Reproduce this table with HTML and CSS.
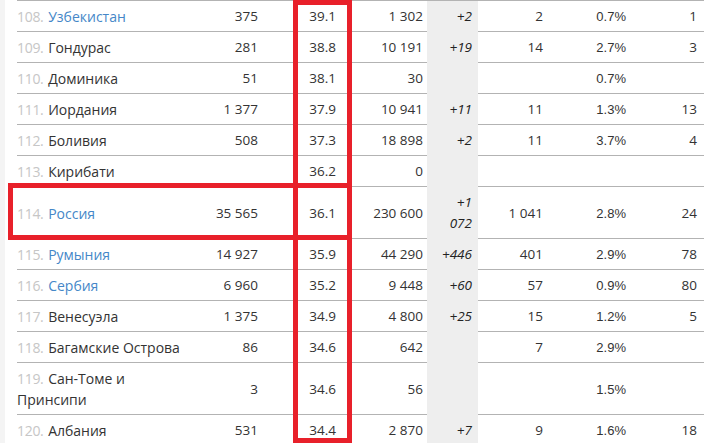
FILE: index.html
```html
<!DOCTYPE html>
<html lang="ru">
<head>
<meta charset="utf-8">
<title>Таблица</title>
<link rel="stylesheet" href="styles.css">
</head>
<body>
<div class="page">
  <div class="card">
    <table class="stats">
      <colgroup>
        <col class="w-name"><col class="w-c2"><col class="w-c3"><col class="w-c4"><col class="w-c5"><col class="w-c6"><col class="w-c7"><col class="w-c8">
      </colgroup>
      <tbody>
        <tr class="first"><td class="name"><span class="rank">108.</span> <a class="link">Узбекистан</a></td><td class="num">375</td><td class="num">39.1</td><td class="num">1 302</td><td class="new">+2</td><td class="num">2</td><td class="num pct">0.7%</td><td class="num last">1</td></tr>
        <tr><td class="name"><span class="rank">109.</span> Гондурас</td><td class="num">281</td><td class="num">38.8</td><td class="num">10 191</td><td class="new">+19</td><td class="num">14</td><td class="num pct">2.7%</td><td class="num last">3</td></tr>
        <tr><td class="name"><span class="rank">110.</span> Доминика</td><td class="num">51</td><td class="num">38.1</td><td class="num">30</td><td class="new"></td><td class="num"></td><td class="num pct">0.7%</td><td class="num last"></td></tr>
        <tr><td class="name"><span class="rank">111.</span> Иордания</td><td class="num">1 377</td><td class="num">37.9</td><td class="num">10 941</td><td class="new">+11</td><td class="num">11</td><td class="num pct">1.3%</td><td class="num last">13</td></tr>
        <tr><td class="name"><span class="rank">112.</span> Боливия</td><td class="num">508</td><td class="num">37.3</td><td class="num">18 898</td><td class="new">+2</td><td class="num">11</td><td class="num pct">3.7%</td><td class="num last">4</td></tr>
        <tr><td class="name"><span class="rank">113.</span> Кирибати</td><td class="num"></td><td class="num">36.2</td><td class="num">0</td><td class="new"></td><td class="num"></td><td class="num pct"></td><td class="num last"></td></tr>
        <tr><td class="name"><span class="rank">114.</span> <a class="link">Россия</a></td><td class="num">35 565</td><td class="num">36.1</td><td class="num">230 600</td><td class="new">+1<br>072</td><td class="num">1 041</td><td class="num pct">2.8%</td><td class="num last">24</td></tr>
        <tr><td class="name"><span class="rank">115.</span> <a class="link">Румыния</a></td><td class="num">14 927</td><td class="num">35.9</td><td class="num">44 290</td><td class="new">+446</td><td class="num">401</td><td class="num pct">2.9%</td><td class="num last">78</td></tr>
        <tr><td class="name"><span class="rank">116.</span> <a class="link">Сербия</a></td><td class="num">6 960</td><td class="num">35.2</td><td class="num">9 448</td><td class="new">+60</td><td class="num">57</td><td class="num pct">0.9%</td><td class="num last">80</td></tr>
        <tr><td class="name"><span class="rank">117.</span> Венесуэла</td><td class="num">1 375</td><td class="num">34.9</td><td class="num">4 800</td><td class="new">+25</td><td class="num">15</td><td class="num pct">1.2%</td><td class="num last">5</td></tr>
        <tr><td class="name"><span class="rank">118.</span> Багамские Острова</td><td class="num">86</td><td class="num">34.6</td><td class="num">642</td><td class="new"></td><td class="num">7</td><td class="num pct">2.9%</td><td class="num last"></td></tr>
        <tr><td class="name"><span class="rank">119.</span> Сан-Томе и<br>Принсипи</td><td class="num">3</td><td class="num">34.6</td><td class="num">56</td><td class="new"></td><td class="num"></td><td class="num pct">1.5%</td><td class="num last"></td></tr>
        <tr><td class="name"><span class="rank">120.</span> Албания</td><td class="num">531</td><td class="num">34.4</td><td class="num">2 870</td><td class="new">+7</td><td class="num">9</td><td class="num pct">1.6%</td><td class="num last">18</td></tr>
      </tbody>
    </table>
  </div>
  <div class="mark mark-col"></div>
  <div class="mark mark-row"></div>
</div>
</body>
</html>
```
FILE: styles.css
```css
html, body {
  margin: 0;
  padding: 0;
  background: #f4f4f4;
  overflow: hidden;
}
.page {
  position: relative;
  width: 716px;
  height: 443px;
  overflow: hidden;
}
.card {
  margin-left: 5px;
  padding-left: 12px;
  background: #ffffff;
  height: 443px;
}
.stats {
  border-collapse: separate;
  border-spacing: 0;
  table-layout: fixed;
  width: 687px;
  font-family: "Open Sans", "Noto Sans", sans-serif;
  font-size: 13.5px;
  line-height: 21px;
  color: #333333;
}
.w-name { width: 173px; }
.w-c2 { width: 72px; }
.w-c3 { width: 78px; }
.w-c4 { width: 87px; }
.w-c5 { width: 51px; }
.w-c6 { width: 69px; }
.w-c7 { width: 83px; }
.w-c8 { width: 74px; }
.stats td {
  padding: 5px 4px 4px 0;
  line-height: 21px;
  border-bottom: 1px solid #b3b3b3;
  vertical-align: middle;
  white-space: nowrap;
}
.stats tr.first td {
  border-top: 1px solid #b3b3b3;
}
.stats td.name {
  text-align: left;
  padding-left: 0;
  font-size: 14px;
}
.rank {
  color: #c6c6c6;
  letter-spacing: -0.3px;
  margin-right: 1px;
}
.link {
  color: #4587c8;
  text-decoration: none;
}
.stats td.num {
  text-align: right;
}
.stats td.new {
  background: #eeeeee;
  border-color: #eeeeee;
  text-align: right;
  font-style: italic;
  padding-right: 6px;
  color: #222222;
}
.stats td.pct {
  font-family: "Liberation Sans", Arial, sans-serif;
  font-size: 13px;
}
.stats td.last {
  padding-right: 7px;
}
.mark {
  position: absolute;
  box-sizing: border-box;
  border: 5px solid #e8202a;
}
.mark-col {
  left: 293px;
  top: 0;
  width: 59px;
  height: 443px;
}
.mark-row {
  left: 8px;
  top: 183px;
  width: 344px;
  height: 57px;
}
```
